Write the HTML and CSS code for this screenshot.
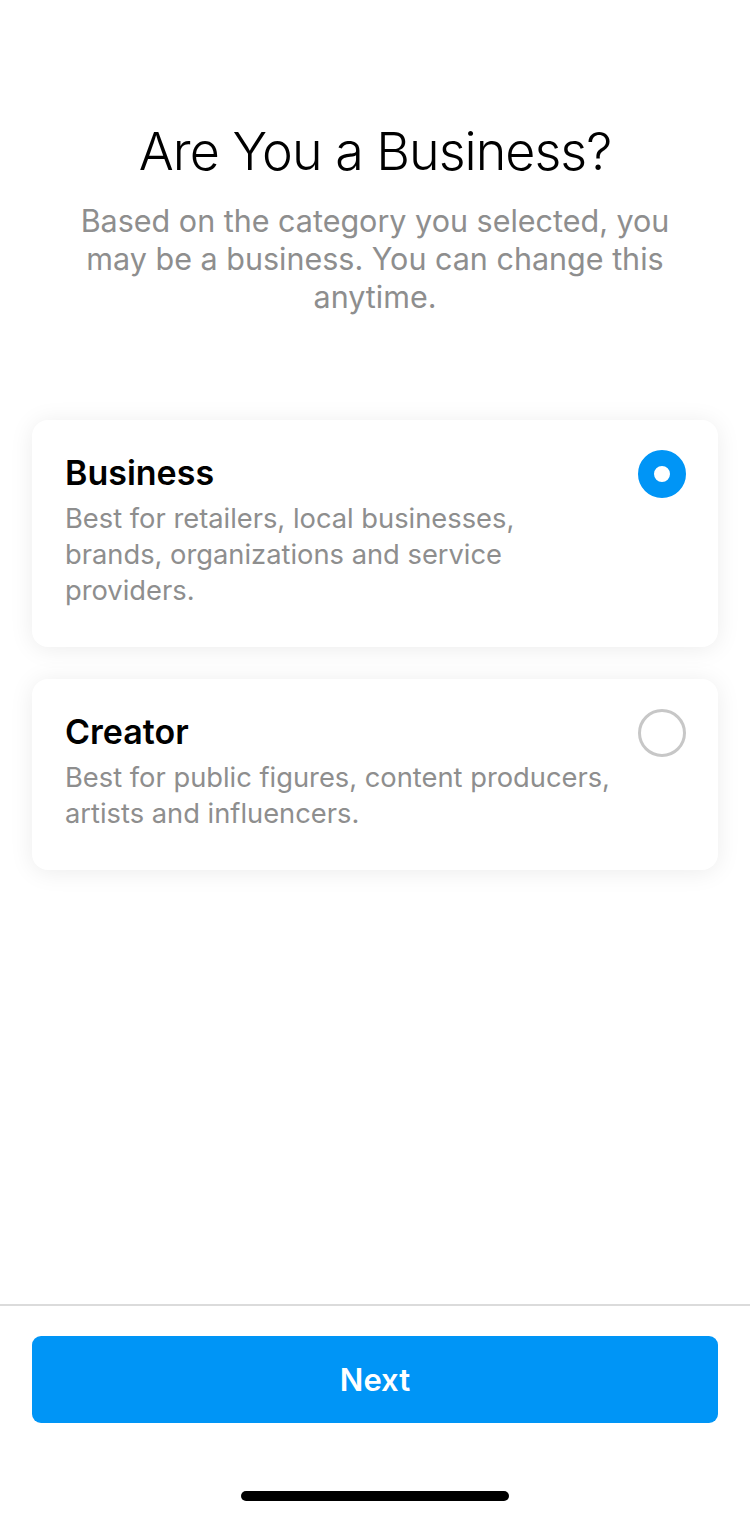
FILE: index.html
```html
<!DOCTYPE html>
<html>
<head>
    <title>Are You a Business?</title>
    <link rel="stylesheet" href="styles.css">
</head>
<body>
    <div class="screen">
        <div class="main">
            <h1 class="title">Are You a Business?</h1>
            <p class="subtitle">Based on the category you selected, you may be a business. You can change this anytime.</p>

            <div class="options">
                <div class="option selected">
                    <div class="option-text">
                        <div class="option-name">Business</div>
                        <div class="option-desc">Best for retailers, local businesses, brands, organizations and service providers.</div>
                    </div>
                    <div class="radio"></div>
                </div>
                <div class="option">
                    <div class="option-text">
                        <div class="option-name">Creator</div>
                        <div class="option-desc">Best for public figures, content producers, artists and influencers.</div>
                    </div>
                    <div class="radio"></div>
                </div>
            </div>
        </div>

        <div class="footer">
            <button class="next-btn">Next</button>
            <div class="home-bar"></div>
        </div>
    </div>
</body>
</html>
```

FILE: styles.css
```css
body {
    margin: 0;
    padding: 0;
    background: #fff;
    color: #000;
    font-family: Inter, "Noto Sans", sans-serif;
}
.screen {
    width: 750px;
    height: 1518px;
    display: flex;
    flex-direction: column;
}
.main {
    flex: 1;
    padding-top: 120px;
}
.title {
    margin: 0;
    text-align: center;
    font-size: 52px;
    font-weight: 300;
    line-height: 64px;
    letter-spacing: -1px;
}
.subtitle {
    margin: 18px auto 0;
    width: 640px;
    text-align: center;
    font-size: 30.5px;
    line-height: 38px;
    color: #8e8e8e;
}
.options {
    margin: 104px 32px 0;
    display: flex;
    flex-direction: column;
    gap: 32px;
}
.option {
    display: flex;
    align-items: flex-start;
    gap: 20px;
    padding: 33px 32px 38px 33px;
    background: #fff;
    border-radius: 16px;
    box-shadow: 0 2px 24px rgba(0, 0, 0, 0.08);
}
.option-text {
    flex: 1;
    max-width: 552px;
}
.option-name {
    font-size: 34px;
    font-weight: 600;
    line-height: 40px;
}
.option-desc {
    margin-top: 8px;
    font-size: 27.3px;
    line-height: 36px;
    color: #8e8e8e;
}
.radio {
    margin-left: auto;
    margin-top: -3px;
    width: 48px;
    height: 48px;
    box-sizing: border-box;
    border-radius: 50%;
    border: 3px solid #c7c7c7;
    flex-shrink: 0;
}
.option.selected .radio {
    border: 16px solid #0095f6;
    background: #fff;
}
.footer {
    border-top: 2px solid #dbdbdb;
    padding: 30px 32px 17px;
    display: flex;
    flex-direction: column;
    align-items: center;
}
.next-btn {
    width: 100%;
    height: 87px;
    border: none;
    border-radius: 9px;
    background: #0095f6;
    color: #fff;
    font-family: Inter, "Noto Sans", sans-serif;
    font-size: 31px;
    font-weight: 600;
}
.home-bar {
    margin-top: 68px;
    width: 268px;
    height: 10px;
    border-radius: 5px;
    background: #000;
}
```
